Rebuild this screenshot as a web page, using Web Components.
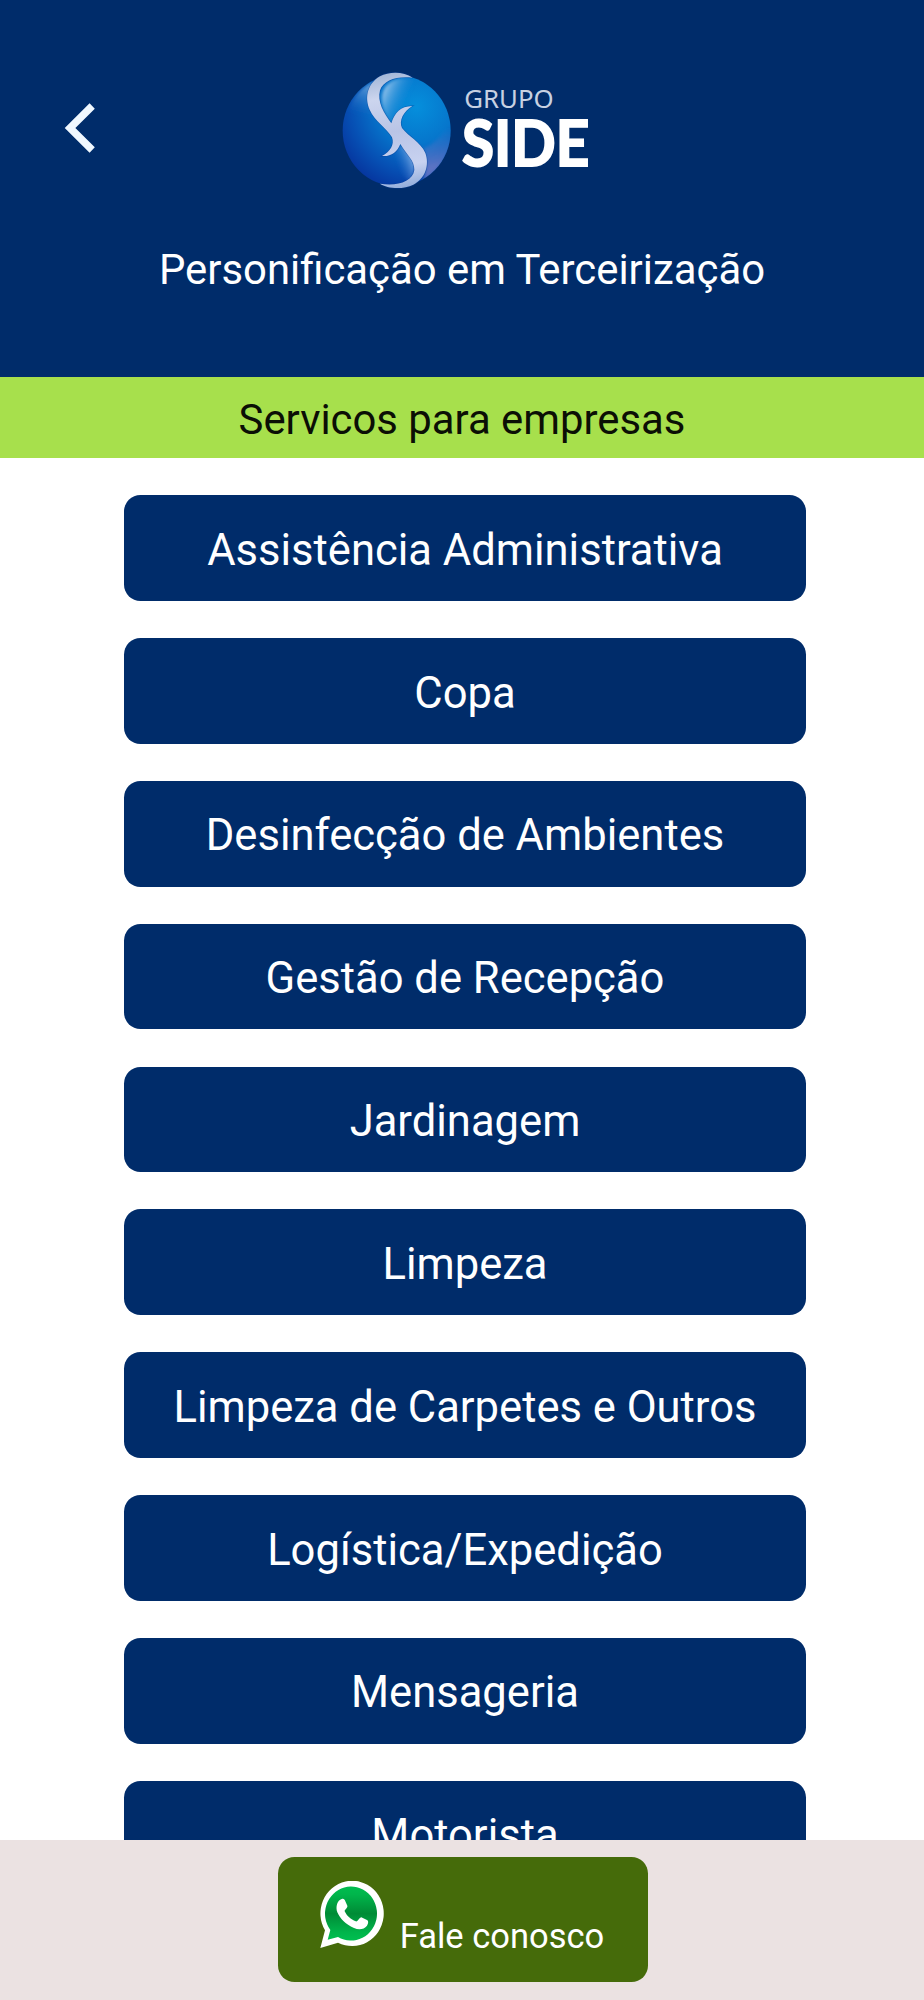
<!DOCTYPE html>
<html lang="pt-BR">
<head>
<meta charset="utf-8">
<title>Grupo Side</title>
<style>
  html, body {
    margin: 0;
    height: 100%;
    background: #ffffff;
    font-family: Roboto, "Liberation Sans", sans-serif;
  }
</style>
</head>
<body>
<side-app>
  <side-header slot="header">Personificação em Terceirização</side-header>
  <section-title slot="header">Servicos para empresas</section-title>
  <service-button>Assistência Administrativa</service-button>
  <service-button>Copa</service-button>
  <service-button>Desinfecção de Ambientes</service-button>
  <service-button>Gestão de Recepção</service-button>
  <service-button>Jardinagem</service-button>
  <service-button>Limpeza</service-button>
  <service-button>Limpeza de Carpetes e Outros</service-button>
  <service-button>Logística/Expedição</service-button>
  <service-button>Mensageria</service-button>
  <service-button>Motorista</service-button>
  <contact-bar slot="footer">Fale conosco</contact-bar>
</side-app>

<script>
const appTemplate = document.createElement("template");
appTemplate.innerHTML = `
    <style>
        :host {
            display: flex;
            flex-direction: column;
            height: 2000px;
            overflow: hidden;
        }
        main {
            flex: 1;
            min-height: 0;
            overflow: hidden;
            display: flex;
            flex-direction: column;
            align-items: center;
            gap: 37.1px;
            padding: 37.2px 0 0 6px;
        }
    </style>
    <slot name="header"></slot>
    <main><slot></slot></main>
    <slot name="footer"></slot>
`;

const logoTemplate = document.createElement("template");
logoTemplate.innerHTML = `
    <style>
        :host { display: block; }
        svg { display: block; width: 290px; height: 140px; }
    </style>
    <svg viewBox="0 0 870 420" role="img" aria-label="Grupo Side">
        <defs>
            <radialGradient id="ball" gradientUnits="userSpaceOnUse" cx="290" cy="140" r="275">
                <stop offset="0" stop-color="#058fdc"/>
                <stop offset=".4" stop-color="#0676cc"/>
                <stop offset=".72" stop-color="#0650b4"/>
                <stop offset="1" stop-color="#06309a"/>
            </radialGradient>
            <linearGradient id="shineTop" gradientUnits="userSpaceOnUse" x1="186" y1="92" x2="262" y2="124">
                <stop offset="0" stop-color="#b5d5f2" stop-opacity=".85"/>
                <stop offset="1" stop-color="#1c8ddb" stop-opacity="0"/>
            </linearGradient>
            <linearGradient id="shineLeft" gradientUnits="userSpaceOnUse" x1="135" y1="80" x2="112" y2="165">
                <stop offset="0" stop-color="#7fb0e0" stop-opacity=".65"/>
                <stop offset="1" stop-color="#1a72c8" stop-opacity="0"/>
            </linearGradient>
            <linearGradient id="shineLow" gradientUnits="userSpaceOnUse" x1="282" y1="300" x2="232" y2="318">
                <stop offset="0" stop-color="#9fc0ee" stop-opacity=".75"/>
                <stop offset="1" stop-color="#2d6fd0" stop-opacity="0"/>
            </linearGradient>
            <linearGradient id="edge" gradientUnits="userSpaceOnUse" x1="352" y1="320" x2="345" y2="205">
                <stop offset="0" stop-color="#8080c8" stop-opacity=".7"/>
                <stop offset="1" stop-color="#5a72c8" stop-opacity="0"/>
            </linearGradient>
            <linearGradient id="ribbon" gradientUnits="userSpaceOnUse" x1="200" y1="40" x2="270" y2="385">
                <stop offset="0" stop-color="#a3b8d8"/>
                <stop offset=".2" stop-color="#ccd5ee"/>
                <stop offset=".5" stop-color="#b9c4e6"/>
                <stop offset=".8" stop-color="#c8d2f0"/>
                <stop offset="1" stop-color="#8fabda"/>
            </linearGradient>
            <clipPath id="disc"><ellipse cx="230" cy="212" rx="162" ry="167"/></clipPath>
            <filter id="soft" x="-20%" y="-20%" width="140%" height="140%">
                <feGaussianBlur stdDeviation="5"/>
            </filter>
        </defs>
        <ellipse cx="230" cy="212" rx="162" ry="167" fill="url(#ball)"/>
        <g clip-path="url(#disc)">
            <g filter="url(#soft)">
                <path d="M160 66 C110 90 85 130 82 190 L190 200 L150 135Z" fill="url(#shineLeft)"/>
                <path d="M214 190 C176 140 171 75 232 57 C290 50 320 70 345 104 C300 90 250 120 214 190Z" fill="url(#shineTop)"/>
                <path d="M238 262 L258 250 C285 280 296 320 270 365 C235 340 215 310 200 290Z" fill="url(#shineLow)"/>
                <path d="M400 165 C410 250 370 330 310 360 C322 320 320 295 310 265 C340 255 372 225 400 165Z" fill="url(#edge)"/>
            </g>
        </g>
        <path d="M278 53 C250 34 208 34 180 49 C145 69 132 110 149 149 C163 182 200 204 216 232 C224 254 211 275 186 288 C213 290 231 278 241 252 C260 285 284 300 283 330 C278 366 231 379 180 371 C202 386 248 390 280 374 C316 356 329 315 316 279 C302 246 265 230 246 204 C236 182 250 155 277 138 C241 139 224 158 214 190 C191 158 171 126 180 91 C190 60 232 47 278 53Z"
              fill="url(#ribbon)" stroke="#0b3f96" stroke-opacity=".45" stroke-width="4" paint-order="stroke"/>
        <text x="433" y="144" font-family="'Noto Sans', 'Open Sans', sans-serif" font-size="78" fill="#c7d1e2" textLength="268" lengthAdjust="spacingAndGlyphs">GRUPO</text>
        <text x="426" y="319" font-family="Lato, sans-serif" font-weight="700" font-size="190" fill="#ffffff" stroke="#ffffff" stroke-width="6" textLength="382" lengthAdjust="spacingAndGlyphs">SIDE</text>
    </svg>
`;

const headerTemplate = document.createElement("template");
headerTemplate.innerHTML = `
    <style>
        :host {
            display: block;
            flex: none;
            box-sizing: border-box;
            height: 377px;
            padding-top: 60px;
            background: #002c6a;
            color: #ffffff;
        }
        .top {
            display: grid;
            grid-template-columns: 320px auto 1fr;
        }
        button {
            justify-self: start;
            align-self: start;
            margin: 42px 0 0 63px;
            padding: 0;
            border: 0;
            background: none;
        }
        button svg { display: block; }
        p {
            margin: 44px 0 0;
            line-height: 52px;
            font-size: 41.85px;
            text-align: center;
        }
    </style>
    <div class="top">
        <button aria-label="Voltar">
            <svg width="34" height="52" viewBox="0 0 34 52">
                <path d="M29.2 4 L7 26 L29.2 48" fill="none" stroke="#f0f8ff" stroke-width="7.4"/>
            </svg>
        </button>
        <side-logo></side-logo>
    </div>
    <p><slot></slot></p>
`;

const titleTemplate = document.createElement("template");
titleTemplate.innerHTML = `
    <style>
        :host {
            display: block;
            flex: none;
            height: 81px;
            line-height: 86px;
            background: #a7e04c;
            color: #0b0f05;
            font-size: 41.85px;
            text-align: center;
        }
    </style>
    <slot></slot>
`;

const buttonTemplate = document.createElement("template");
buttonTemplate.innerHTML = `
    <style>
        :host {
            display: block;
            flex: none;
            width: 682.4px;
            height: 105.75px;
        }
        button {
            display: block;
            box-sizing: border-box;
            width: 100%;
            height: 100%;
            padding: 5.5px 0 0;
            border: 0;
            border-radius: 16.5px;
            background: #002c6a;
            color: #ffffff;
            font: inherit;
            font-size: 43.55px;
            line-height: 1.2;
        }
    </style>
    <button><slot></slot></button>
`;

const contactTemplate = document.createElement("template");
contactTemplate.innerHTML = `
    <style>
        :host {
            display: flex;
            flex: none;
            justify-content: center;
            align-items: flex-start;
            box-sizing: border-box;
            height: 160px;
            padding: 17px 0 0 2px;
            background: #ebe2e2;
        }
        button {
            display: flex;
            align-items: flex-start;
            box-sizing: border-box;
            width: 369.6px;
            height: 125.4px;
            padding: 24px 0 0 41.5px;
            border: 0;
            border-radius: 16.5px;
            background: #456b0a;
            color: #ffffff;
            font: inherit;
            font-size: 34.5px;
        }
        svg { display: block; flex: none; }
        span {
            margin: 34px 0 0 14px;
            line-height: 42px;
            white-space: nowrap;
        }
    </style>
    <button>
        <svg width="66" height="68" viewBox="0 0 198 204">
            <defs>
                <linearGradient id="bubble" x1="0" y1="0" x2="0" y2="1">
                    <stop offset="0" stop-color="#00bd4f"/>
                    <stop offset=".15" stop-color="#00b54b"/>
                    <stop offset=".5" stop-color="#008b36"/>
                    <stop offset=".85" stop-color="#00b54b"/>
                    <stop offset="1" stop-color="#00bf50"/>
                </linearGradient>
            </defs>
            <path d="M1 201 L15 148 A95 98 0 1 1 54 185Z" fill="#ffffff"/>
            <path d="M23 176 L31 147 A78 81 0 1 1 54 168Z" fill="url(#bubble)"/>
            <path d="M65 54 C71 52 74 55 76 61 L82 74 C84 80 73 86 74 91 C80 104 93 116 107 121 C114 123 118 109 124 109 L141 117 C147 120 144 130 141 134 C132 146 116 147 102 141 C76 130 60 113 52 94 C46 77 52 58 65 54Z" fill="#ffffff"/>
        </svg>
        <span><slot></slot></span>
    </button>
`;

class SideElement extends HTMLElement {
  constructor(template) {
    super();
    this._root = this.attachShadow({ mode: "open" });
    this._root.appendChild(template.content.cloneNode(true));
  }
}

class SideApp extends SideElement {
  constructor() {
    super(appTemplate);
  }
}

class SideLogo extends SideElement {
  constructor() {
    super(logoTemplate);
  }
}

class SideHeader extends SideElement {
  constructor() {
    super(headerTemplate);
  }
}

class SectionTitle extends SideElement {
  constructor() {
    super(titleTemplate);
  }
}

class ServiceButton extends SideElement {
  constructor() {
    super(buttonTemplate);
  }
}

class ContactBar extends SideElement {
  constructor() {
    super(contactTemplate);
  }
}

window.customElements.define("side-logo", SideLogo);
window.customElements.define("side-header", SideHeader);
window.customElements.define("section-title", SectionTitle);
window.customElements.define("service-button", ServiceButton);
window.customElements.define("contact-bar", ContactBar);
window.customElements.define("side-app", SideApp);
</script>
</body>
</html>
